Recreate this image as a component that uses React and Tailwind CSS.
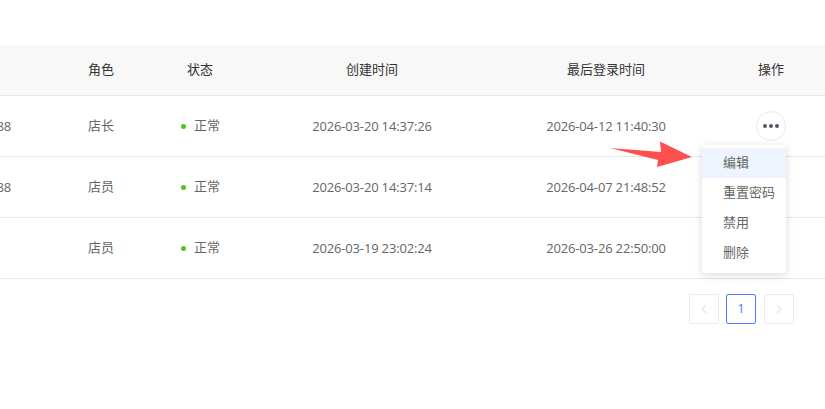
import React from 'react';

const rows = [
  { phone: '88', role: '店长', created: '2026-03-20 14:37:26', login: '2026-04-12 11:40:30' },
  { phone: '88', role: '店员', created: '2026-03-20 14:37:14', login: '2026-04-07 21:48:52' },
  { phone: '', role: '店员', created: '2026-03-19 23:02:24', login: '2026-03-26 22:50:00' },
];

const gridCols = 'grid grid-cols-[88px_62px_100px_244px_224px_107px] items-center';

const Table = () => (
  <div>
    <div className={`${gridCols} h-[51px] bg-[#f8f8f8] border-b border-[#e8e8e8] text-[#333]`}>
      <div />
      <div>角色</div>
      <div className="text-center">状态</div>
      <div className="text-center">创建时间</div>
      <div className="text-center">最后登录时间</div>
      <div className="text-center -ml-px">操作</div>
    </div>
    {rows.map((row, i) => (
      <div key={i} className={`${gridCols} h-[61px] border-b border-[#e8e8e8] text-[#666]`}>
        <div className="w-[11px] pt-px overflow-hidden flex justify-end tracking-[-0.17px]">{row.phone}</div>
        <div>{row.role}</div>
        <div className="flex items-center justify-center pl-px">
          <span className="w-[5px] h-[5px] mt-px rounded-full bg-[#52c41a] mr-[8px]" />
          <span>正常</span>
        </div>
        <div className="text-center pt-px tracking-[-0.17px]">{row.created}</div>
        <div className="text-center pt-px tracking-[-0.17px]">{row.login}</div>
        <div className="flex justify-center">
          {i === 0 && (
            <button className="w-[30px] h-[30px] -ml-px rounded-full border border-[#e8e8f0] bg-white flex items-center justify-center gap-[2px]">
              <span className="w-[4px] h-[4px] rounded-full bg-[#4f5a72]" />
              <span className="w-[4px] h-[4px] rounded-full bg-[#4f5a72]" />
              <span className="w-[4px] h-[4px] rounded-full bg-[#4f5a72]" />
            </button>
          )}
        </div>
      </div>
    ))}
  </div>
);

const Pagination = () => (
  <div className="flex justify-end gap-[8px] mt-[15px] pr-[31px]">
    <button className="w-[30px] h-[30px] -mr-px rounded-[2px] border border-[#ebebf2] flex items-center justify-center">
      <svg width="8" height="10" viewBox="0 0 8 10" fill="none" stroke="#e4e4ec" strokeWidth="1.2">
        <path d="M6 1 L2 5 L6 9" />
      </svg>
    </button>
    <button className="w-[30px] h-[30px] rounded-[2px] border border-[#4a7dff] text-[#4a7dff] flex items-center justify-center">1</button>
    <button className="w-[30px] h-[30px] rounded-[2px] border border-[#ebebf2] flex items-center justify-center">
      <svg width="8" height="10" viewBox="0 0 8 10" fill="none" stroke="#e4e4ec" strokeWidth="1.2">
        <path d="M2 1 L6 5 L2 9" />
      </svg>
    </button>
  </div>
);

const ActionMenu = () => (
  <div className="absolute left-[702px] top-[145px] w-[84px] h-[128px] pt-[3px] bg-white rounded-[2px] shadow-[0_2px_8px_rgba(0,0,0,0.15)] text-[#666]">
    <div className="h-[30px] pl-[21px] flex items-center bg-[#eef4fd]">编辑</div>
    <div className="h-[30px] pl-[21px] flex items-center">重置密码</div>
    <div className="h-[30px] pl-[21px] flex items-center">禁用</div>
    <div className="h-[30px] pl-[21px] flex items-center">删除</div>
  </div>
);

const Arrow = () => (
  <svg className="absolute left-[605px] top-[138px]" width="92" height="32" viewBox="605 138 92 32">
    <polygon points="610,148 661,152 660,141.5 692,157 657,167 658,160" fill="#ff5050" />
  </svg>
);

export default function App() {
  return (
    <div className="relative w-[825px] h-[409px] overflow-hidden bg-white pt-[45px] text-[13px] font-['Open_Sans','Noto_Sans_CJK_SC',sans-serif]">
      <Table />
      <Pagination />
      <ActionMenu />
      <Arrow />
    </div>
  );
}
